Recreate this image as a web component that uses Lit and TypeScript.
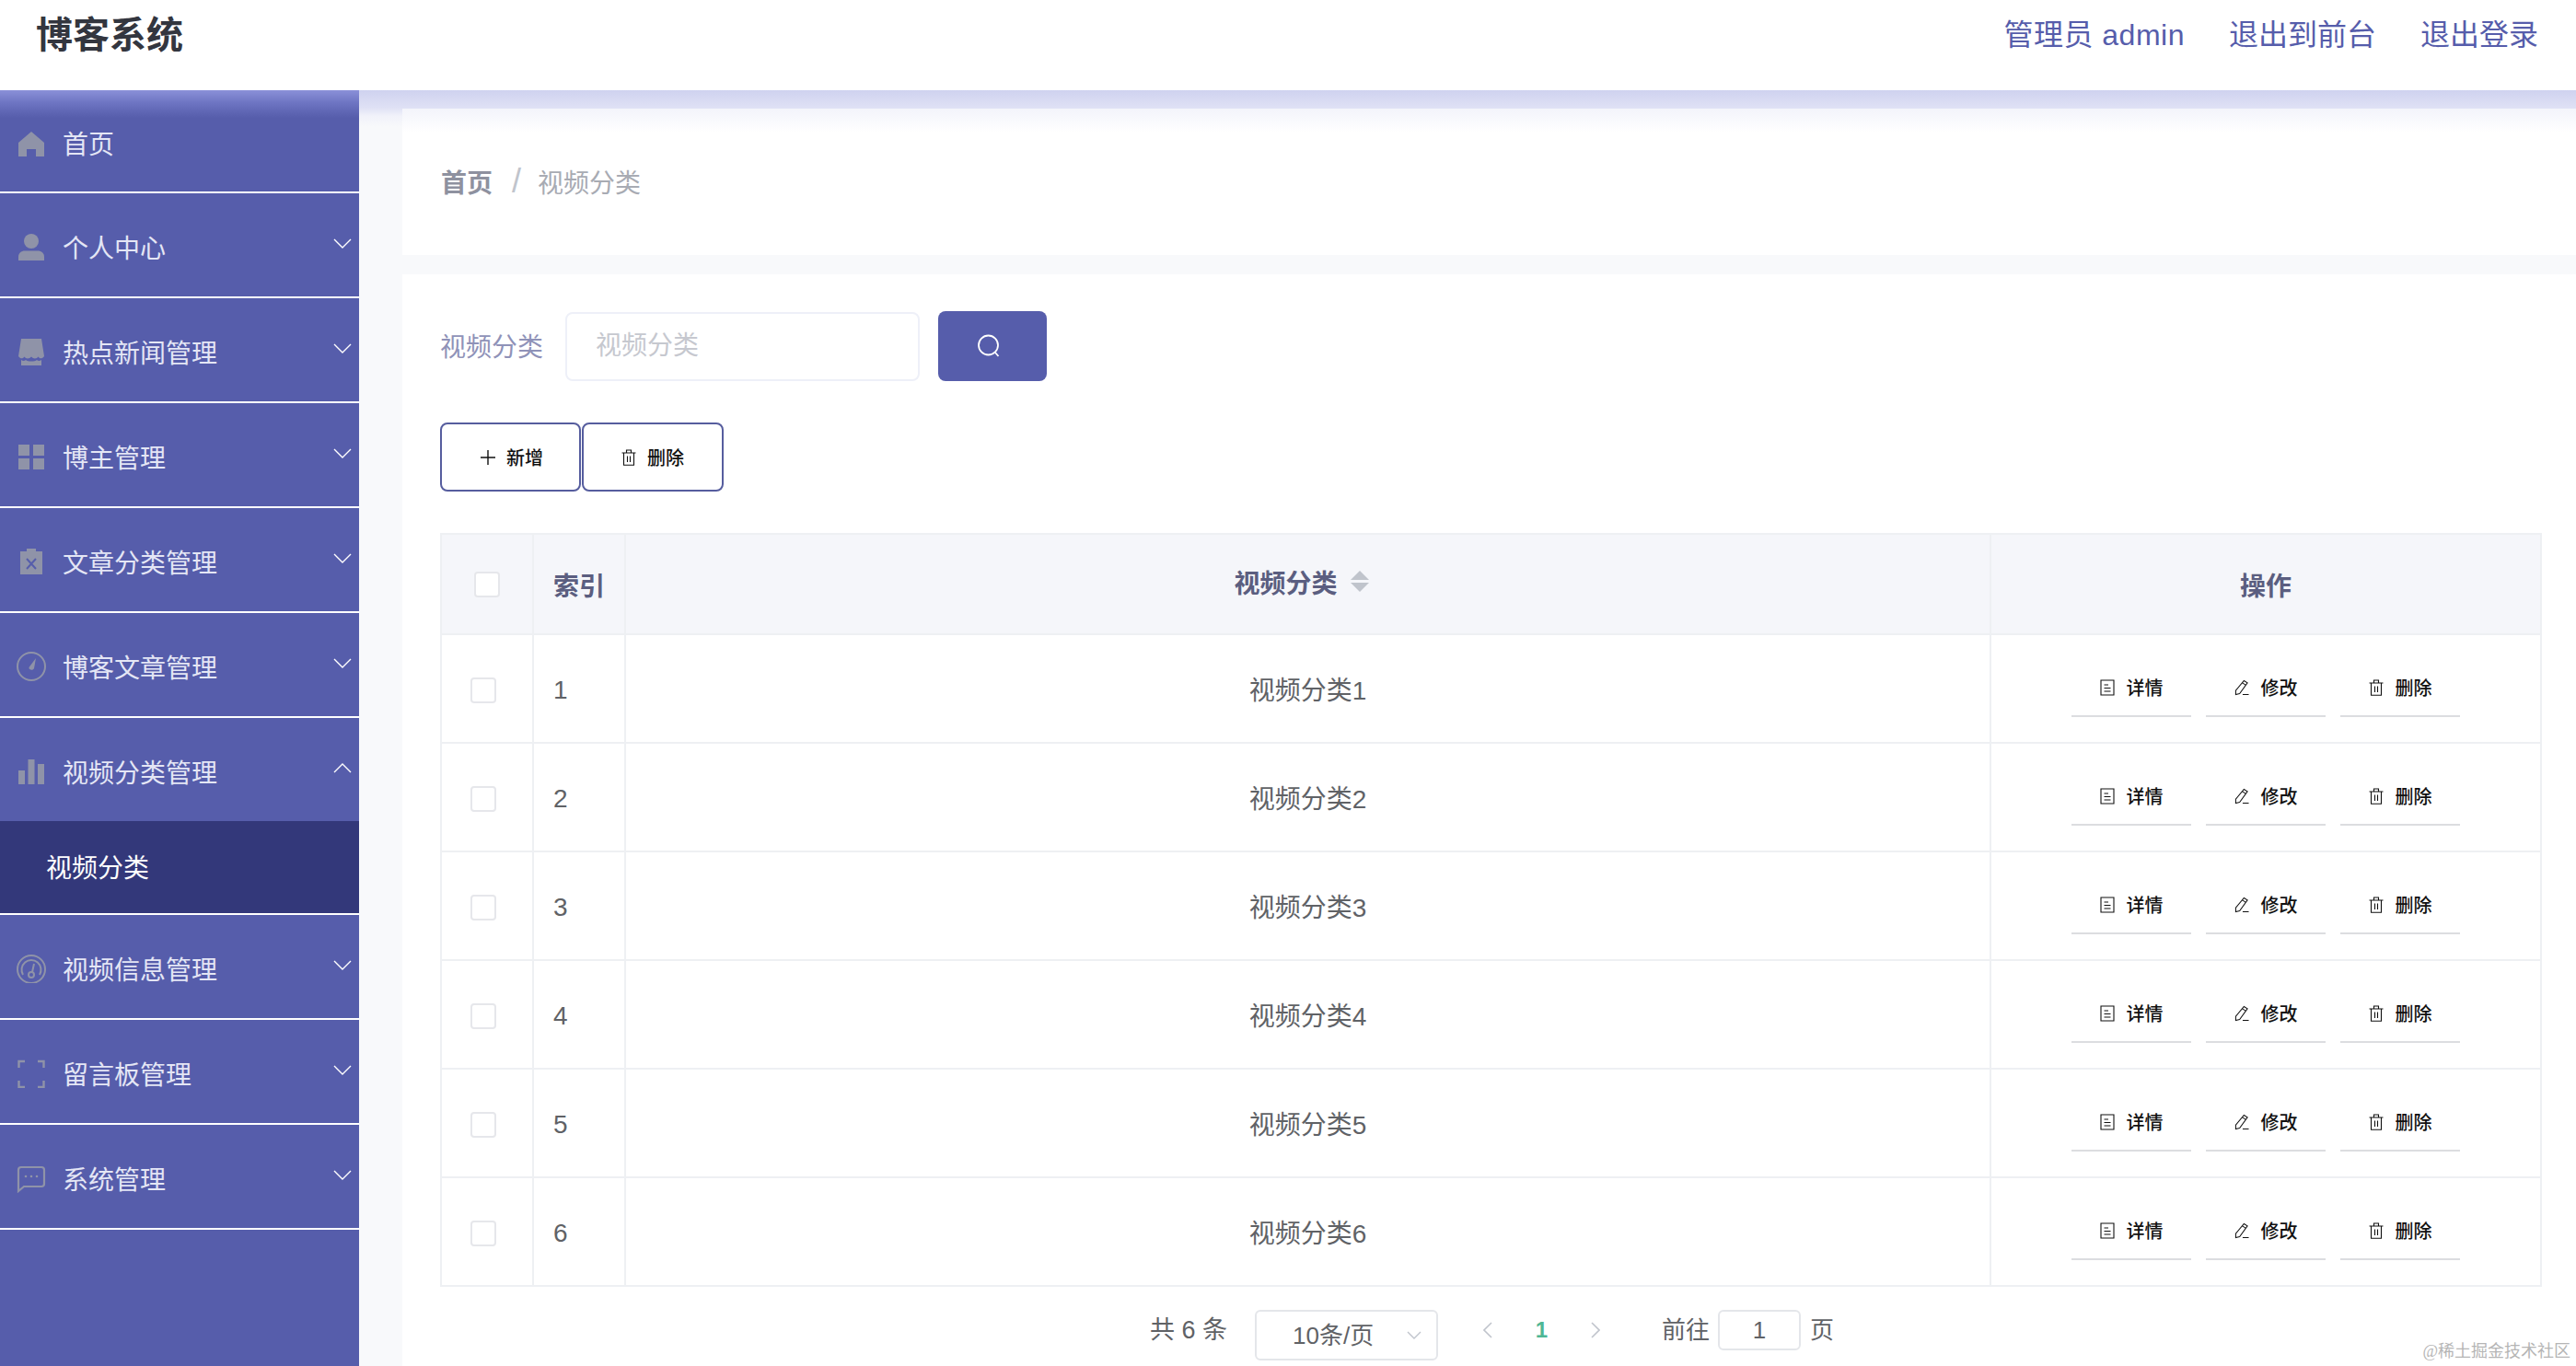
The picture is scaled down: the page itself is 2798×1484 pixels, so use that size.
import { LitElement, html, css, svg } from 'lit';
import { customElement } from 'lit/decorators.js';
import { classMap } from 'lit/directives/class-map.js';

const grey = '#8f93a8';

const icons = {
  home: svg`<path fill="${grey}" d="M16 4 L30 16 V31 H21 V23 H11 V31 H2 V16 Z"/>`,
  user: svg`<circle cx="16" cy="10" r="8" fill="${grey}"/><path fill="${grey}" d="M2 31 V27 C2 23 5 20.5 9 20.5 H23 C27 20.5 30 23 30 27 V31 Z"/>`,
  shop: svg`<path fill="${grey}" d="M5 2 H27 L30 21 C28 24 25 24 23.5 21.5 C22 24 18 24 16 21.5 C14 24 10 24 8.5 21.5 C7 24 4 24 2 21 Z"/><path fill="${grey}" d="M5 25 C7 26.5 9 26 10 25 C12 27 20 27 22 25 C23 26 25 26.5 27 25 V31 H5 Z"/>`,
  grid: svg`<path fill="${grey}" d="M2 3 H14 V15 H2 Z M18 3 H30 V15 H18 Z M2 18 H14 V30 H2 Z M18 18 H30 V30 H18 Z"/>`,
  clip: svg`<path fill="${grey}" d="M11 2 H21 V5 H28 V30 H4 V5 H11 Z"/><path stroke="#565dab" stroke-width="2" fill="none" d="M11 13 L21 24 M21 13 L11 24"/>`,
  compass: svg`<circle cx="16" cy="16" r="15" fill="none" stroke="${grey}" stroke-width="2"/><path fill="${grey}" d="M21 7 L19 18 C18 21 13 20 13.5 17 Z"/>`,
  chart: svg`<path fill="${grey}" d="M2 15 H9 V30 H2 Z M12.5 3 H19.5 V30 H12.5 Z M23 8 H30 V30 H23 Z"/>`,
  gauge: svg`<circle cx="16" cy="17" r="15" fill="none" stroke="${grey}" stroke-width="2"/><path fill="none" stroke="${grey}" stroke-width="2" d="M7 23 A10.5 10.5 0 1 1 25 23"/><circle cx="16" cy="23" r="3" fill="none" stroke="${grey}" stroke-width="2"/><path stroke="${grey}" stroke-width="2" d="M17 20 L19 11"/>`,
  full: svg`<path fill="none" stroke="${grey}" stroke-width="2.4" d="M9 3 H2.5 V10 M23 3 H29.5 V10 M9 31 H2.5 V24 M23 31 H29.5 V24"/>`,
  chat: svg`<path fill="none" stroke="${grey}" stroke-width="2.2" d="M5 4 H27 Q30 4 30 7 V22 Q30 25 27 25 H8 L2 30 V7 Q2 4 5 4 Z"/><circle cx="10" cy="14" r="1.3" fill="${grey}"/><circle cx="16" cy="14" r="1.3" fill="${grey}"/><circle cx="22" cy="14" r="1.3" fill="${grey}"/>`,
};

const trash = html`<svg class="act-icon" viewBox="0 0 16 18" fill="none" stroke="currentColor" stroke-width="1.1"><path d="M0.5 4 H15.5 M2.5 4 V17.3 H13.5 V4 M5.5 4 V1 H10.5 V4 M6.5 7.5 V14 M9.5 7.5 V14"/></svg>`;
const doc = html`<svg class="act-icon" viewBox="0 0 16 18" fill="none" stroke="currentColor" stroke-width="1.1"><path d="M1 1 H15 V17 H1 Z M4.5 6 H9 M4.5 9.5 H11.5 M4.5 13 H11.5"/></svg>`;
const pencil = html`<svg class="act-icon" viewBox="0 0 17 18" fill="none" stroke="currentColor" stroke-width="1.1"><path d="M11 1 L15 3.5 L6 16 L1.5 17 L1.5 12.5 Z M9.2 3.6 L13.2 6.2 M9.5 17 H16.5"/></svg>`;

const menu = [
  { name: '首页', icon: icons.home, first: true },
  { name: '个人中心', icon: icons.user, arrow: true },
  { name: '热点新闻管理', icon: icons.shop, arrow: true },
  { name: '博主管理', icon: icons.grid, arrow: true },
  { name: '文章分类管理', icon: icons.clip, arrow: true },
  { name: '博客文章管理', icon: icons.compass, arrow: true },
  { name: '视频分类管理', icon: icons.chart, arrow: true, open: true },
  { name: '视频信息管理', icon: icons.gauge, arrow: true },
  { name: '留言板管理', icon: icons.full, arrow: true },
  { name: '系统管理', icon: icons.chat, arrow: true },
];

const rows = [1, 2, 3, 4, 5, 6];

@customElement('app-root')
export class AppRoot extends LitElement {
  static styles = css`
    :host {
      display: block;
      width: 2798px;
      height: 1484px;
      overflow: hidden;
      position: relative;
      font-family: "Liberation Sans", "Noto Sans CJK SC", sans-serif;
      font-size: 28px;
      background: #fff;
    }
    * { box-sizing: border-box; }

    .top {
      height: 98px;
      display: flex;
      justify-content: space-between;
      padding: 0 41px 0 39px;
      line-height: 76px;
      background: #fff;
    }
    .logo { font-size: 40px; font-weight: 700; color: #33363f; }
    .links { display: flex; gap: 48px; font-size: 32px; color: #565dab; }
    .links span:first-child { letter-spacing: 0.5px; }

    .body { display: flex; height: 1386px; }

    .side {
      width: 390px;
      flex: none;
      background: linear-gradient(#8a90d8 0, #6d74c2 14px, #565dab 30px);
    }
    .item {
      height: 114px;
      display: flex;
      align-items: center;
      padding-left: 18px;
      padding-right: 8px;
      border-bottom: 2px solid #fff;
      color: #e4e6f5;
    }
    .item.first { height: 112px; }
    .item.open { height: 112px; border-bottom: 0; }
    .item svg.ic { width: 32px; height: 32px; flex: none; margin-top: 4px; }
    .item .label { margin-left: 18px; padding-top: 3px; }
    .arrow { width: 20px; height: 11px; margin-left: auto; margin-bottom: 3px; flex: none; }
    .sub {
      height: 102px;
      display: flex;
      align-items: center;
      padding-left: 50px;
      padding-bottom: 2px;
      color: #fff;
      background: #33387a;
      border-bottom: 2px solid #fff;
    }

    .main {
      flex: 1;
      padding: 20px 0 0 47px;
      display: flex;
      flex-direction: column;
      gap: 21px;
      background: linear-gradient(#cfd2ef 0, #dfe1f5 19px, #f1f2fa 28px, #f8f9fb 40px);
    }
    .crumb {
      height: 159px;
      flex: none;
      display: flex;
      align-items: center;
      padding: 0 0 2px 42px;
      background: linear-gradient(#f3f4fb 0, #fff 26px);
    }
    .crumb b { font-weight: 700; color: #8e919f; }
    .crumb i { font-style: normal; font-size: 36px; line-height: 1; color: #c0c4cc; margin: 0 18px 0 21px; }
    .crumb span { color: #a8abb3; }

    .card {
      flex: 1;
      background: #fff;
      padding: 40px 37px 0 41px;
    }
    .search { display: flex; align-items: center; height: 76px; }
    .search label { color: #8f92b8; width: 136px; padding-bottom: 3px; }
    .search input {
      width: 385px;
      height: 75px;
      border: 2px solid #eef0f8;
      border-radius: 8px;
      padding: 0 31px;
      font: inherit;
      outline: none;
    }
    .search input::placeholder { color: #c6c8cf; }
    .go {
      width: 118px;
      height: 76px;
      margin-left: 20px;
      background: #565dab;
      border-radius: 8px;
      display: flex;
      align-items: center;
      justify-content: center;
    }
    .go svg { width: 26px; height: 26px; margin-right: 9px; }

    .tools { display: flex; gap: 1px; margin-top: 45px; }
    .tool {
      width: 153px;
      height: 75px;
      border: 2px solid #565d9e;
      border-radius: 8px;
      display: flex;
      align-items: center;
      justify-content: center;
      gap: 12px;
      font-size: 20px;
      font-weight: 500;
      color: #111;
    }
    .tool:first-child { padding-left: 3px; }
    .tool + .tool { width: 154px; }
    .tool svg.plus { width: 16px; height: 16px; }

    .table {
      margin-top: 45px;
      border-top: 2px solid #eef0f3;
      border-left: 2px solid #eef0f3;
    }
    .row {
      display: grid;
      grid-template-columns: 100px 100px 1fr 598px;
      height: 118px;
      color: #606266;
    }
    .row.head { height: 109px; background: #f5f6fa; color: #5b5e80; font-weight: 700; }
    .cell {
      display: flex;
      align-items: center;
      justify-content: center;
      border-right: 2px solid #eef0f3;
      border-bottom: 2px solid #eef0f3;
    }
    .cell.idx { justify-content: flex-start; padding: 3px 0 0 21px; }
    .head .cell.idx { padding-top: 0; }
    .check {
      width: 28px;
      height: 28px;
      border: 2px solid #e6e7eb;
      border-radius: 4px;
      background: #fff;
      margin: 3px 8px 0 0;
    }
    .head .check { margin: 0; }
    .sort { display: flex; align-items: center; gap: 14px; margin: 0 14px 6px 0; }
    .carets { display: flex; flex-direction: column; gap: 3px; }
    .carets span { width: 0; height: 0; border: 10px solid transparent; border-top: 0; border-bottom-color: #c0c4cc; }
    .carets span + span { border: 10px solid transparent; border-bottom: 0; border-top-color: #c0c4cc; }

    .acts { display: flex; gap: 16px; margin-bottom: 1px; }
    .act {
      width: 130px;
      height: 62px;
      display: flex;
      align-items: center;
      justify-content: center;
      gap: 13px;
      border-bottom: 2px solid #dcdde0;
      font-size: 20px;
      font-weight: 500;
      color: #111;
    }
    .act-icon { width: 16px; height: 18px; flex: none; }

    .pager {
      display: flex;
      justify-content: center;
      align-items: flex-start;
      margin-top: 25px;
      padding-left: 2px;
      font-size: 26px;
      line-height: 44px;
      color: #606266;
    }
    .total { font-size: 27px; margin-right: 30px; }
    .size {
      width: 199px;
      height: 55px;
      border: 2px solid #e4e6ea;
      border-radius: 6px;
      display: flex;
      align-items: center;
      padding: 0 16px 0 39px;
      justify-content: space-between;
    }
    .size svg { width: 16px; height: 9px; }
    .nav { display: flex; align-items: center; height: 44px; margin-left: 49px; }
    .nav svg { width: 10px; height: 18px; }
    .nav b { width: 107px; text-align: center; color: #4fb795; font-size: 24px; }
    .jump { margin-left: 67px; }
    .pager input {
      width: 90px;
      height: 44px;
      margin: 0 10px 0 9px;
      border: 2px solid #e4e6ea;
      border-radius: 6px;
      text-align: center;
      font: inherit;
      color: #606266;
      outline: none;
    }

    .mark {
      position: absolute;
      right: 6px;
      bottom: 5px;
      font-family: "Liberation Serif", "Noto Sans CJK SC", serif;
      font-size: 18px;
      line-height: 22px;
      color: #b5b5b5;
    }
  `;

  private renderItem(m: any) {
    return html`
      <div class=${classMap({ item: true, first: !!m.first, open: !!m.open })}>
        <svg class="ic" viewBox="0 0 32 32">${m.icon}</svg>
        <span class="label">${m.name}</span>
        ${m.arrow
          ? html`<svg class="arrow" viewBox="0 0 20 11" fill="none" stroke="#fff" stroke-width="1.4">
              <path d=${m.open ? 'M1 10 L10 1 L19 10' : 'M1 1 L10 10 L19 1'}></path>
            </svg>`
          : ''}
      </div>
      ${m.open ? html`<div class="sub">视频分类</div>` : ''}
    `;
  }

  private renderRow(n: number) {
    return html`
      <div class="row">
        <div class="cell"><span class="check"></span></div>
        <div class="cell idx">${n}</div>
        <div class="cell">视频分类${n}</div>
        <div class="cell">
          <div class="acts">
            <div class="act">${doc}详情</div>
            <div class="act">${pencil}修改</div>
            <div class="act">${trash}删除</div>
          </div>
        </div>
      </div>
    `;
  }

  render() {
    return html`
      <div class="top">
        <div class="logo">博客系统</div>
        <div class="links">
          <span>管理员 admin</span>
          <span>退出到前台</span>
          <span>退出登录</span>
        </div>
      </div>
      <div class="body">
        <div class="side">${menu.map((m) => this.renderItem(m))}</div>
        <div class="main">
          <div class="crumb"><b>首页</b><i>/</i><span>视频分类</span></div>
          <div class="card">
            <div class="search">
              <label>视频分类</label>
              <input placeholder="视频分类" />
              <div class="go">
                <svg viewBox="0 0 26 26" fill="none" stroke="#fff" stroke-width="1.8">
                  <circle cx="12.5" cy="12" r="10.5"></circle>
                  <path d="M20 20 L23.5 24"></path>
                </svg>
              </div>
            </div>
            <div class="tools">
              <div class="tool">
                <svg class="plus" viewBox="0 0 16 16" stroke="#111" stroke-width="1.4"><path d="M8 0 V16 M0 8 H16"></path></svg>新增
              </div>
              <div class="tool">${trash}删除</div>
            </div>
            <div class="table">
              <div class="row head">
                <div class="cell"><span class="check"></span></div>
                <div class="cell idx">索引</div>
                <div class="cell">
                  <div class="sort">视频分类<span class="carets"><span></span><span></span></span></div>
                </div>
                <div class="cell">操作</div>
              </div>
              ${rows.map((n) => this.renderRow(n))}
            </div>
            <div class="pager">
              <span class="total">共 6 条</span>
              <div class="size">
                <span>10条/页</span>
                <svg viewBox="0 0 16 9" fill="none" stroke="#c0c4cc" stroke-width="1.4"><path d="M1 1 L8 8 L15 1"></path></svg>
              </div>
              <div class="nav">
                <svg viewBox="0 0 10 18" fill="none" stroke="#c0c4cc" stroke-width="1.6"><path d="M9 1 L1 9 L9 17"></path></svg>
                <b>1</b>
                <svg viewBox="0 0 10 18" fill="none" stroke="#c0c4cc" stroke-width="1.6"><path d="M1 1 L9 9 L1 17"></path></svg>
              </div>
              <span class="jump">前往</span>
              <input value="1" />
              <span>页</span>
            </div>
          </div>
        </div>
      </div>
      <div class="mark">@稀土掘金技术社区</div>
    `;
  }
}
